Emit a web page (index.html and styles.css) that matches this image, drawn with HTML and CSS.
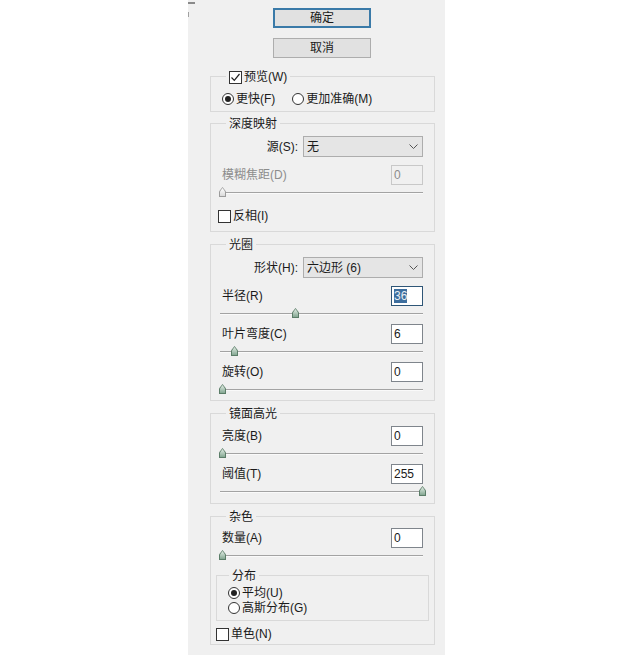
FILE: index.html
```html
<!DOCTYPE html>
<html lang="zh-CN">
<head>
    <meta charset="UTF-8">
    <meta name="viewport" content="width=device-width, initial-scale=1.0">
    <title>镜头模糊</title>
    <link rel="stylesheet" href="styles.css">
</head>
<body>
    <div class="panel">
        <div class="btn btn-default">确定</div>
        <div class="btn btn-cancel">取消</div>

        <!-- 预览 -->
        <div class="group group-preview">
            <div class="group-title">
                <span class="check"><svg width="11" height="11" viewBox="0 0 11 11"><path d="M1.5 5.5 L4.3 8.3 L9.5 2" fill="none" stroke="#222" stroke-width="1.2"/></svg></span>预览(W)
            </div>
            <div class="radio-row">
                <span class="opt"><span class="radio on"></span>更快(F)</span>
                <span class="opt"><span class="radio"></span>更加准确(M)</span>
            </div>
        </div>

        <!-- 深度映射 -->
        <div class="group group-depth">
            <div class="group-title">深度映射</div>
            <div class="select-row">
                <span class="select-label">源(S):</span>
                <div class="select">
                    <span>无</span>
                    <svg width="9" height="5" viewBox="0 0 9 5"><path d="M0.5 0.5 L4.5 4.5 L8.5 0.5" fill="none" stroke="#555" stroke-width="1"/></svg>
                </div>
            </div>
            <div class="field disabled">
                <span>模糊焦距(D)</span>
                <span class="num">0</span>
            </div>
            <div class="slider"><span class="thumb off" style="left: -3px"></span></div>
            <div class="check-row invert">
                <span class="check"></span>反相(I)
            </div>
        </div>

        <!-- 光圈 -->
        <div class="group group-iris">
            <div class="group-title">光圈</div>
            <div class="select-row">
                <span class="select-label">形状(H):</span>
                <div class="select">
                    <span>六边形 (6)</span>
                    <svg width="9" height="5" viewBox="0 0 9 5"><path d="M0.5 0.5 L4.5 4.5 L8.5 0.5" fill="none" stroke="#555" stroke-width="1"/></svg>
                </div>
            </div>
            <div class="field">
                <span>半径(R)</span>
                <span class="num focus"><span class="sel">36</span></span>
            </div>
            <div class="slider"><span class="thumb" style="left: 70px"></span></div>
            <div class="field next">
                <span>叶片弯度(C)</span>
                <span class="num">6</span>
            </div>
            <div class="slider"><span class="thumb" style="left: 9px"></span></div>
            <div class="field next">
                <span>旋转(O)</span>
                <span class="num">0</span>
            </div>
            <div class="slider"><span class="thumb" style="left: -3px"></span></div>
        </div>

        <!-- 镜面高光 -->
        <div class="group group-specular">
            <div class="group-title">镜面高光</div>
            <div class="field first">
                <span>亮度(B)</span>
                <span class="num">0</span>
            </div>
            <div class="slider"><span class="thumb" style="left: -3px"></span></div>
            <div class="field next">
                <span>阈值(T)</span>
                <span class="num">255</span>
            </div>
            <div class="slider"><span class="thumb" style="left: 197px"></span></div>
        </div>

        <!-- 杂色 -->
        <div class="group group-noise">
            <div class="group-title">杂色</div>
            <div class="field next">
                <span>数量(A)</span>
                <span class="num">0</span>
            </div>
            <div class="slider"><span class="thumb" style="left: -3px"></span></div>
            <div class="subgroup">
                <div class="group-title">分布</div>
                <div class="radio-row first"><span class="opt"><span class="radio on"></span>平均(U)</span></div>
                <div class="radio-row second"><span class="opt"><span class="radio"></span>高斯分布(G)</span></div>
            </div>
            <div class="check-row mono">
                <span class="check"></span>单色(N)
            </div>
        </div>
    </div>
</body>
</html>
```

FILE: styles.css
```css
body {
    margin: 0;
    background: #fff;
    font-family: "Liberation Sans", "Noto Sans CJK SC", sans-serif;
    font-size: 12px;
    line-height: 14px;
    color: #1a1a1a;
}
.panel {
    position: relative;
    box-sizing: border-box;
    width: 257px;
    margin-left: 188px;
    padding: 8px 0 10px 22px;
    background: #f0f0f0;
}
.panel::before {
    content: "";
    position: absolute;
    top: 2px;
    left: 0;
    width: 7px;
    height: 2px;
    background: #8a8a8a;
}
.panel::after {
    content: "";
    position: absolute;
    top: 12px;
    left: 0;
    width: 1px;
    height: 5px;
    background: #a0a0a0;
}
.btn {
    box-sizing: border-box;
    width: 98px;
    height: 20px;
    margin-left: 63px;
    background: #e1e1e1;
    border: 1px solid #adadad;
    text-align: center;
    line-height: 18px;
}
.btn-default {
    border: 2px solid #3a7aa8;
    line-height: 16px;
}
.btn-cancel {
    margin-top: 10px;
}
.group {
    box-sizing: border-box;
    width: 225px;
    border: 1px solid #d9d9d9;
    padding: 0 11px;
}
.group-title {
    display: flex;
    align-items: center;
    width: fit-content;
    height: 14px;
    margin: -7px 0 0 4px;
    padding: 0 3px;
    background: #f0f0f0;
}
.group-preview {
    margin-top: 18px;
    padding-bottom: 5px;
}
.group-depth {
    margin-top: 11px;
    padding-bottom: 8px;
}
.group-iris {
    margin-top: 12px;
    padding-bottom: 4px;
}
.group-specular {
    margin-top: 12px;
    padding-bottom: 5px;
}
.group-noise {
    margin-top: 12px;
    padding-bottom: 3px;
}
.check {
    box-sizing: border-box;
    display: inline-flex;
    align-items: center;
    justify-content: center;
    width: 13px;
    height: 13px;
    margin-right: 2px;
    border: 1px solid #333;
    background: #fff;
}
.radio-row {
    display: flex;
    align-items: center;
    height: 14px;
    margin-top: 8px;
}
.opt {
    display: flex;
    align-items: center;
    margin-right: 17px;
}
.radio {
    box-sizing: border-box;
    display: inline-flex;
    align-items: center;
    justify-content: center;
    width: 12px;
    height: 12px;
    margin-right: 2px;
    border: 1px solid #333;
    border-radius: 50%;
    background: #fff;
}
.radio.on::after {
    content: "";
    width: 6px;
    height: 6px;
    border-radius: 50%;
    background: #222;
}
.select-row {
    display: flex;
    align-items: center;
    height: 21px;
    margin-top: 5px;
}
.select-label {
    flex: 1;
    text-align: right;
    padding-right: 5px;
}
.select {
    box-sizing: border-box;
    display: flex;
    align-items: center;
    justify-content: space-between;
    width: 120px;
    height: 21px;
    padding: 0 4px 0 3px;
    background: #e5e5e5;
    border: 1px solid #adadad;
}
.field {
    display: flex;
    align-items: center;
    justify-content: space-between;
    height: 20px;
    margin-top: 8px;
}
.field.next {
    margin-top: 4px;
}
.field.first {
    margin-top: 5px;
}
.num {
    box-sizing: border-box;
    width: 32px;
    height: 20px;
    padding-left: 2px;
    line-height: 18px;
    background: #fff;
    border: 1px solid #7f858c;
}
.num.focus {
    border-color: #2f5677;
}
.sel {
    background: #3d6e9e;
    color: #e8eef4;
}
.disabled {
    color: #8c8c8c;
}
.disabled .num {
    background: #f0f0f0;
    border-color: #c8c8c8;
}
.slider {
    position: relative;
    height: 12px;
    margin-top: 2px;
}
.slider::before {
    content: "";
    position: absolute;
    top: 5px;
    left: -2px;
    right: 0;
    height: 1px;
    background: #a3a3a3;
    border-bottom: 1px solid #fafafa;
}
.thumb {
    position: absolute;
    top: 0;
    width: 7px;
    height: 10px;
    background: #5b7d68;
    clip-path: polygon(50% 0, 100% 45%, 100% 100%, 0 100%, 0 45%);
}
.thumb::after {
    content: "";
    position: absolute;
    inset: 1px;
    background: linear-gradient(#e2ede5, #84a792);
    clip-path: polygon(50% 0, 100% 45%, 100% 100%, 0 100%, 0 45%);
}
.thumb.off {
    background: #9c9c9c;
}
.thumb.off::after {
    background: linear-gradient(#fff, #dadada);
}
.check-row {
    display: flex;
    align-items: center;
    height: 14px;
}
.check-row.invert {
    margin: 10px 0 0 -4px;
}
.check-row.mono {
    margin: 6px 0 0 -6px;
}
.subgroup {
    border: 1px solid #d9d9d9;
    margin: 13px -6px 0;
    padding: 0 11px 5px;
}
.subgroup .group-title {
    margin-left: 1px;
}
.subgroup .radio-row.first {
    margin-top: 3px;
}
.subgroup .radio-row.second {
    margin-top: 1px;
}
```
